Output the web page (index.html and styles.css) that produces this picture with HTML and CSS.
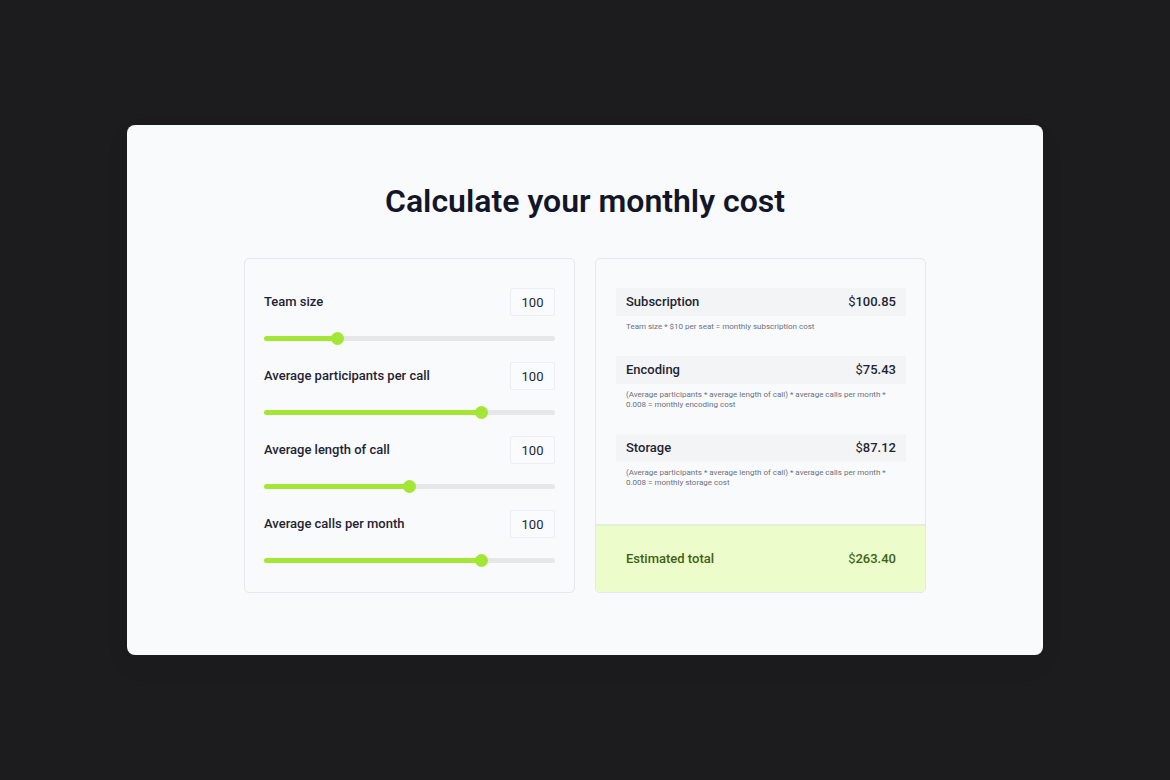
FILE: index.html
```html
<!DOCTYPE html>
<html lang="en">
<head>
    <meta charset="utf-8">
    <meta name="viewport" content="width=device-width, initial-scale=1">
    <title>Monthly cost calculator</title>
    <link rel="stylesheet" href="styles.css">
</head>
<body>
    <main class="card">
        <h1>Calculate your monthly cost</h1>

        <div class="panels">
            <form class="panel inputs">
                <div class="field">
                    <label for="team">Team size</label>
                    <input type="text" class="number" id="team" inputmode="numeric" value="100">
                    <input type="range" class="slider" aria-label="Team size" value="24" style="--fill: 24%">
                </div>
                <div class="field">
                    <label for="participants">Average participants per call</label>
                    <input type="text" class="number" id="participants" inputmode="numeric" value="100">
                    <input type="range" class="slider" aria-label="Average participants per call" value="76" style="--fill: 76%">
                </div>
                <div class="field">
                    <label for="duration">Average length of call</label>
                    <input type="text" class="number" id="duration" inputmode="numeric" value="100">
                    <input type="range" class="slider" aria-label="Average length of call" value="50" style="--fill: 50%">
                </div>
                <div class="field">
                    <label for="calls">Average calls per month</label>
                    <input type="text" class="number" id="calls" inputmode="numeric" value="100">
                    <input type="range" class="slider" aria-label="Average calls per month" value="76" style="--fill: 76%">
                </div>
            </form>

            <section class="panel summary">
                <div class="costs">
                    <div class="cost">
                        <div class="cost-row"><span>Subscription</span><span><span class="currency">$</span>100.85</span></div>
                        <p>Team size * $10 per seat = monthly subscription cost</p>
                    </div>
                    <div class="cost">
                        <div class="cost-row"><span>Encoding</span><span><span class="currency">$</span>75.43</span></div>
                        <p>(Average participants * average length of call) * average calls per month * 0.008 = monthly encoding cost</p>
                    </div>
                    <div class="cost">
                        <div class="cost-row"><span>Storage</span><span><span class="currency">$</span>87.12</span></div>
                        <p>(Average participants * average length of call) * average calls per month * 0.008 = monthly storage cost</p>
                    </div>
                </div>
                <div class="total"><span>Estimated total</span><span><span class="currency">$</span>263.40</span></div>
            </section>
        </div>
    </main>

    <script>
        // keep the green part of the track in step with the thumb
        document.querySelectorAll('.slider').forEach(slider => {
            slider.addEventListener('input', () => {
                slider.style.setProperty('--fill', slider.value + '%');
            });
        });
    </script>
</body>
</html>
```
FILE: styles.css
```css
* {
    box-sizing: border-box;
}
body {
    margin: 0;
    min-height: 100vh;
    display: flex;
    align-items: center;
    justify-content: center;
    background: #1c1c1e;
    color: #1f2433;
    font-family: Roboto, "Liberation Sans", sans-serif;
    font-size: 13px;
    font-weight: 500;
    line-height: 20px;
}
.card {
    width: 100%;
    max-width: 916px;
    padding: 56px 20px 62px;
    background: #f9fafc;
    border-radius: 8px;
    box-shadow: 0 10px 30px rgba(0,0,0,0.04);
}
h1 {
    margin: 0 0 37px;
    font-size: 32px;
    font-weight: 600;
    line-height: 40px;
    text-align: center;
    color: #121628;
}
.panels {
    display: grid;
    grid-template-columns: repeat(auto-fit, minmax(280px, 1fr));
    gap: 20px;
    max-width: 682px;
    margin: 0 auto;
}
.panel {
    border: 1px solid #e5e7ea;
    border-radius: 5px;
}
.inputs {
    display: grid;
    gap: 17px;
    padding: 29px 19px 25px;
}
.field {
    display: grid;
    grid-template-columns: 1fr auto;
    align-items: center;
    row-gap: 15px;
}
.number {
    width: 45px;
    height: 28px;
    padding: 0;
    border: 1px solid #eceef1;
    border-radius: 2px;
    background: #fafbfd;
    color: inherit;
    font: inherit;
    font-weight: 400;
    text-align: center;
}
.slider {
    grid-column: 1 / -1;
    width: 100%;
    height: 14px;
    margin: 0;
    appearance: none;
    background: none;
    cursor: pointer;
}
.slider::-webkit-slider-runnable-track {
    height: 5px;
    border-radius: 3px;
    background: linear-gradient(to right, #a3e635 var(--fill), #e5e7e9 var(--fill));
}
.slider::-webkit-slider-thumb {
    appearance: none;
    width: 13px;
    height: 13px;
    margin-top: -4px;
    border-radius: 50%;
    background: #a3e635;
}
.summary {
    display: flex;
    flex-direction: column;
    overflow: hidden;
}
.costs {
    display: grid;
    gap: 24px;
    padding: 29px 19px 24px 20px;
}
.cost-row {
    display: flex;
    justify-content: space-between;
    padding: 4px 10px;
    background: #f3f4f6;
}
.cost p {
    margin: 6px 10px 0;
    color: #6b7080;
    font-size: 8px;
    font-weight: 400;
    line-height: 10px;
}
.currency {
    font-weight: 400;
}
.total {
    display: flex;
    justify-content: space-between;
    margin-top: auto;
    padding: 23px 29px 23px 30px;
    border-top: 2px solid #e5eed6;
    background: #ecfccb;
    color: #3f6212;
}
```
